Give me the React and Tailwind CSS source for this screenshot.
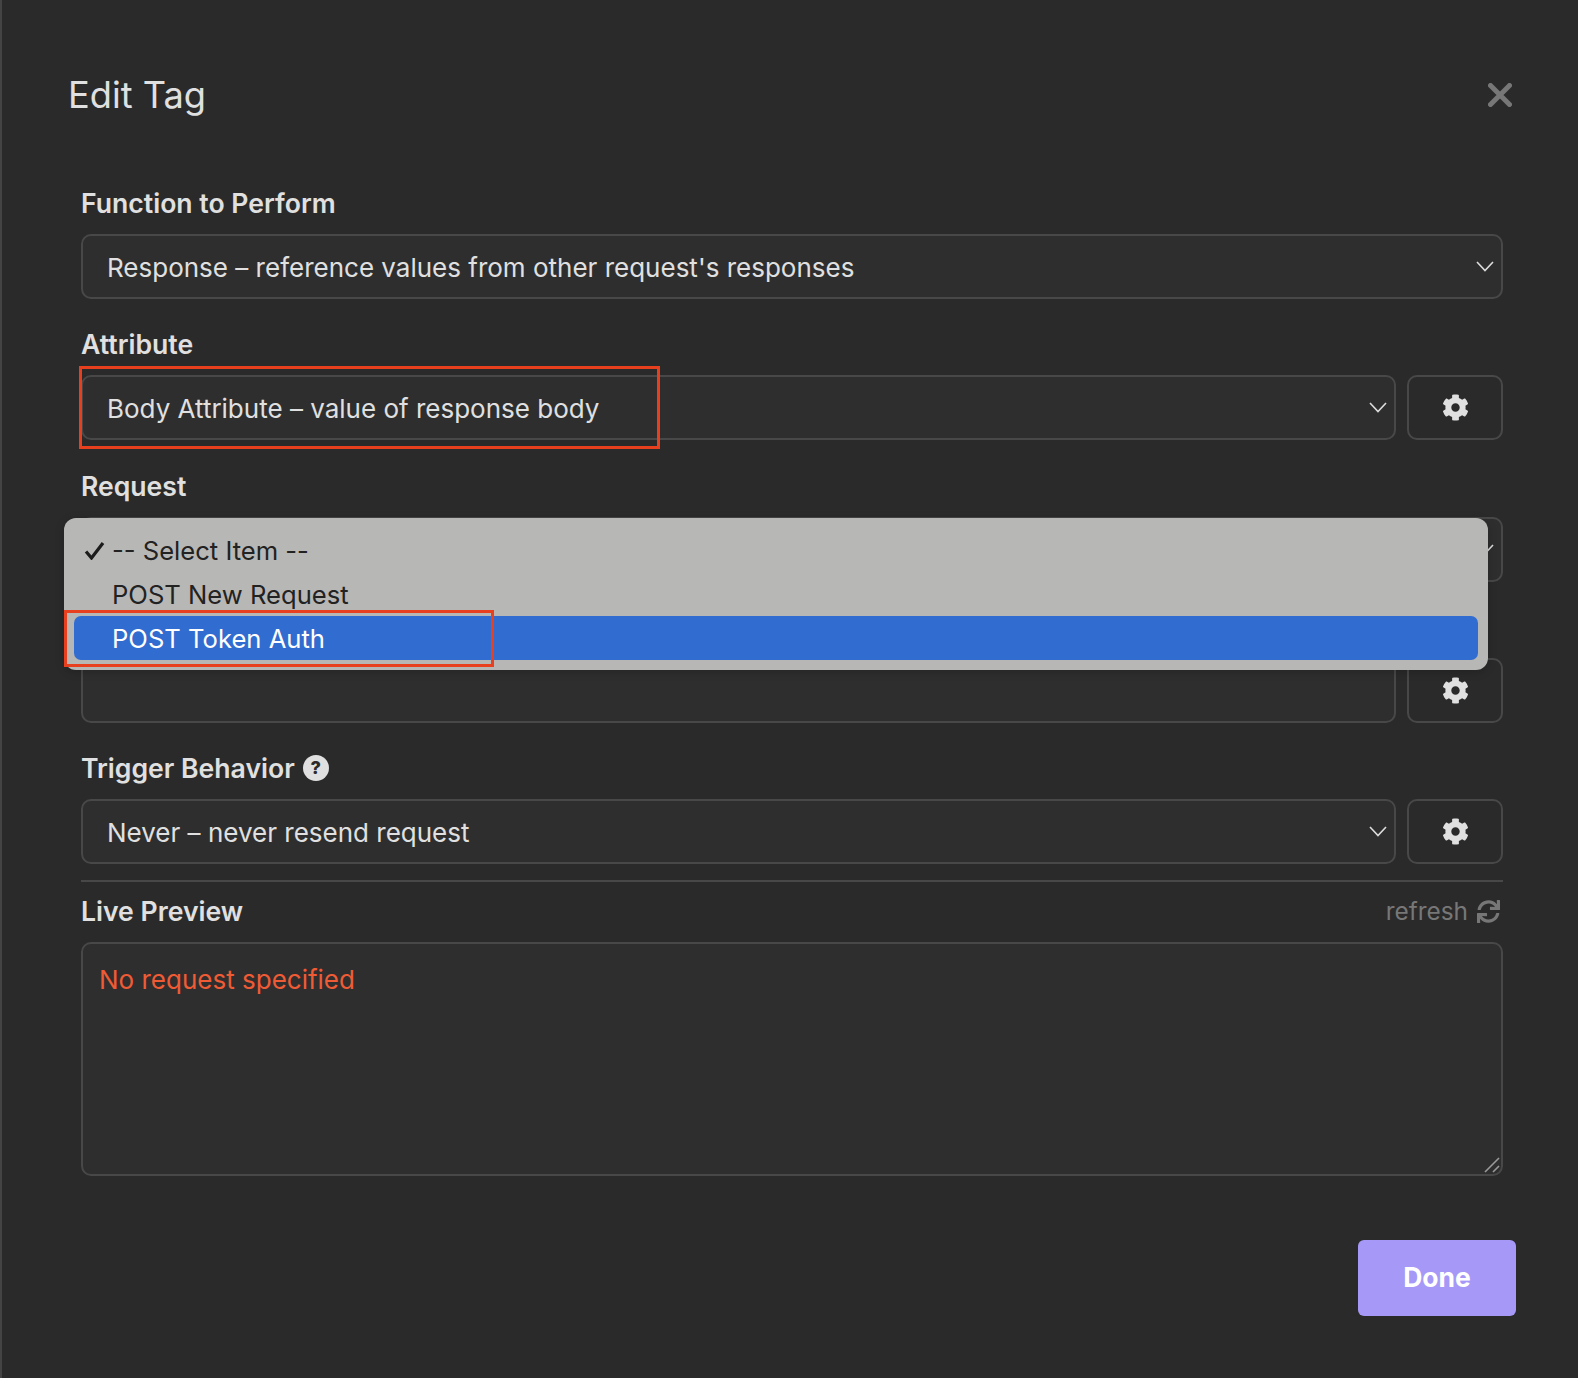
import React from "react";
import { FaCog, FaSync } from "react-icons/fa";

const font = { fontFamily: "Inter, 'Liberation Sans', sans-serif" };

function Chevron() {
  return (
    <svg width="18" height="11" viewBox="0 0 18 11" fill="none" className="shrink-0">
      <polyline points="1,1 9,9.5 17,1" stroke="#dcdcdc" strokeWidth="1.6" />
    </svg>
  );
}

function Select({ text, chevron = true }) {
  return (
    <div className="flex-1 h-[65px] rounded-[10px] border-2 border-[#484848] bg-[#2e2e2e] pl-[24px] pr-[7px] flex items-center justify-between">
      <span className="text-[26px] leading-[32px] pt-[3px] text-[#e0e0e0]">{text}</span>
      {chevron && <Chevron />}
    </div>
  );
}

function GearButton() {
  return (
    <div className="w-[96px] h-[65px] rounded-[10px] border-2 border-[#484848] flex items-center justify-center shrink-0">
      <FaCog className="text-[#e0e0e0] w-[27px] h-[27px]" />
    </div>
  );
}

function Label({ children }) {
  return <div className="h-[30px] mb-[16px] flex items-center gap-[8px] text-[26.6px] leading-[30px] font-semibold text-[#e0e0e0]">{children}</div>;
}

function Field({ label, text, gear, chevron, children }) {
  return (
    <div className="relative mb-[30.25px]">
      <Label>{label}</Label>
      <div className="flex gap-[11px]">
        <Select text={text} chevron={chevron} />
        {gear && <GearButton />}
      </div>
      {children}
    </div>
  );
}

function Popup() {
  return (
    <div className="absolute z-10 left-[-17px] top-[47px] w-[1424px] h-[152px] rounded-[12px] bg-[#b7b7b5] shadow-[0_2px_10px_rgba(0,0,0,0.2)] pt-[10px] px-[10px] text-[25.6px] text-[#222222]">
      <div className="h-[44px] pl-[38px] pt-[4px] flex items-center relative">
        <svg width="21" height="19" viewBox="0 0 21 19" fill="none" className="absolute left-[10px] top-[13px]">
          <path d="M2 10.5 L7.5 17 L19 2" stroke="#1c1c1c" strokeWidth="3.2" />
        </svg>
        -- Select Item --
      </div>
      <div className="h-[44px] pl-[38px] pt-[4px] flex items-center">POST New Request</div>
      <div className="h-[44px] pl-[38px] pt-[4px] flex items-center rounded-[7px] bg-[#316cd0] text-white">POST Token Auth</div>
    </div>
  );
}

export default function App() {
  return (
    <div style={font} className="relative h-[1378px] w-full overflow-hidden bg-[#2a2a2a] border-l-2 border-[#444444] pl-[67px] pr-[62px] pt-[70px]">
      <div className="flex items-center justify-between h-[50px] mb-[68px] pr-[4px]">
        <h1 className="text-[36.2px] leading-[50px] font-normal -ml-[1px] text-[#e0e0e0]">Edit Tag</h1>
        <svg width="24" height="24" viewBox="0 0 24 24" fill="none">
          <path d="M2.5 2.5 L21.5 21.5 M21.5 2.5 L2.5 21.5" stroke="#777777" strokeWidth="5" strokeLinecap="round" />
        </svg>
      </div>

      <div className="pl-[12px] pr-[13px]">
        <Field label="Function to Perform" text="Response – reference values from other request's responses" />
        <Field label="Attribute" text="Body Attribute – value of response body" gear />
        <Field label="Request" text="">
          <Popup />
        </Field>
        <Field label="" text="" gear chevron={false} />
        <div className="relative mb-[16px]">
          <Label>
            Trigger Behavior
            <span className="w-[26px] h-[26px] rounded-full bg-[#e0e0e0] text-[#2a2a2a] text-[18px] leading-[26px] font-extrabold flex items-center justify-center">?</span>
          </Label>
          <div className="flex gap-[11px]">
            <Select text="Never – never resend request" />
            <GearButton />
          </div>
        </div>
        <div className="h-[2px] bg-[#484848] mb-[15px]" />
        <div className="flex items-center justify-between h-[30px] mb-[15px]">
          <span className="text-[26.6px] font-semibold text-[#e0e0e0]">Live Preview</span>
          <span className="flex items-center gap-[9px] text-[24.4px] text-[#777777] pr-[3px] pb-[2px]">
            refresh
            <FaSync className="w-[23px] h-[23px]" />
          </span>
        </div>
        <div className="relative h-[234px] rounded-[10px] border-2 border-[#484848] bg-[#2e2e2e] pl-[16px] pt-[16px]">
          <span className="text-[26px] text-[#ef5b35]">No request specified</span>
          <svg width="16" height="16" viewBox="0 0 16 16" fill="none" className="absolute right-[1px] bottom-[1px]">
            <path d="M1 15 L15 1" stroke="#9a9a9a" strokeWidth="1.6" />
            <path d="M9 15 L15 9" stroke="#9a9a9a" strokeWidth="1.6" />
          </svg>
        </div>
      </div>

      <div className="flex justify-end mt-[64px]">
        <div className="w-[158px] h-[76px] rounded-[6px] bg-[#a698f7] flex items-center justify-center text-[26.5px] font-bold text-white">Done</div>
      </div>

      <div className="absolute z-20 left-[77px] top-[366px] w-[581px] h-[83px] border-[3px] border-[#e8401f] pointer-events-none" />
      <div className="absolute z-20 left-[62px] top-[610px] w-[430px] h-[57px] border-[3px] border-[#e8401f] pointer-events-none" />
    </div>
  );
}
